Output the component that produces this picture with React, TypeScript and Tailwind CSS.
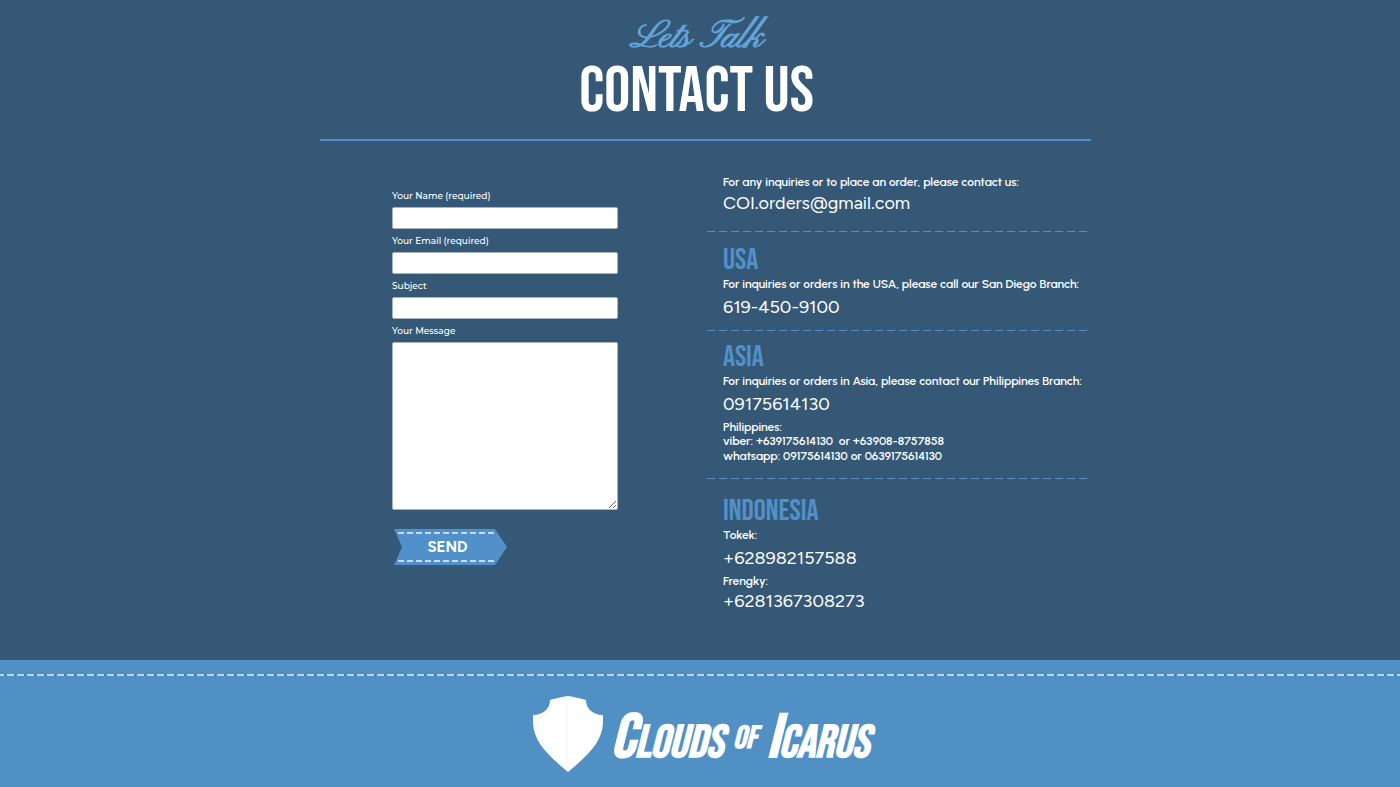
import type { ReactNode } from "react";

const condensed = "font-['Bebas_Neue','Roboto_Condensed','Liberation_Sans_Narrow',sans-serif] uppercase";

const phone = "block text-[18px] leading-6";
const note = "font-['Urbanist','Figtree','Lato',sans-serif] text-[12px] leading-[14px] font-semibold";

function StitchLine() {
  return (
    <div
      aria-hidden="true"
      className="h-px bg-[repeating-linear-gradient(90deg,#5190c8_0_8px,transparent_8px_12px)]"
    />
  );
}

function Region({ title, children }: { title: string; children: ReactNode }) {
  return (
    <section className="pl-4">
      <h2 className={`${condensed} text-[30px] leading-7 text-[#5190c8]`}>{title}</h2>
      {children}
    </section>
  );
}

function Field({ id, label, type = "text" }: { id: string; label: string; type?: string }) {
  return (
    <div className="mb-[3px]">
      <label htmlFor={id} className="block text-[9px] leading-4 font-medium">
        {label}
      </label>
      <input
        id={id}
        name={id}
        type={type}
        className="mt-[3px] mb-1 block h-[22px] w-full rounded-[2px] border border-[#a9b4be] bg-white px-2 text-xs text-gray-800"
      />
    </div>
  );
}

function ContactForm() {
  return (
    <form className="w-[226px] shrink-0 pt-[47px] font-['Montserrat','Open_Sans',sans-serif]" onSubmit={(e) => e.preventDefault()}>
      <Field id="name" label="Your Name (required)" />
      <Field id="email" label="Your Email (required)" type="email" />
      <Field id="subject" label="Subject" />
      <label htmlFor="message" className="block text-[9px] leading-4 font-medium">
        Your Message
      </label>
      <textarea
        id="message"
        name="message"
        className="mt-[3px] block h-[168px] w-full rounded-[2px] border border-[#a9b4be] bg-white px-2 py-1 text-xs text-gray-800"
      />
      <button
        type="submit"
        className="mt-[19px] ml-[2px] flex h-9 w-[113px] flex-col justify-between bg-[#5190c8] py-[3px] pr-3 pl-1 font-['Figtree','Lato',sans-serif] text-[15px] font-bold [clip-path:polygon(0_0,101px_0,100%_50%,101px_100%,0_100%,8px_50%)]"
      >
        <span className="h-[2px] w-full bg-[repeating-linear-gradient(90deg,#c5dbee_0_6px,transparent_6px_9px)]" />
        <span className="w-full pl-[2px] text-center leading-5">SEND</span>
        <span className="h-[2px] w-full bg-[repeating-linear-gradient(90deg,#c5dbee_0_6px,transparent_6px_9px)]" />
      </button>
    </form>
  );
}

function ContactDetails() {
  return (
    <div className="mr-[2px] ml-[89px] min-w-0 flex-1 pt-[34px] whitespace-nowrap">
      <section className="mb-4 pl-4">
        <p className={note}>For any inquiries or to place an order, please contact us:</p>
        <a href="mailto:COI.orders@gmail.com" className={`${phone} mt-[2px]`}>
          COI.orders@gmail.com
        </a>
      </section>
      <StitchLine />
      <div className="pt-[14px] pb-[11px]">
        <Region title="USA">
          <p className={`${note} mt-[3px]`}>For inquiries or orders in the USA, please call our San Diego Branch:</p>
          <a href="tel:6194509100" className={`${phone} mt-1`}>619-450-9100</a>
        </Region>
      </div>
      <StitchLine />
      <div className="pt-3 pb-[15px]">
        <Region title="Asia">
          <p className={`${note} mt-[3px]`}>For inquiries or orders in Asia, please contact our Philippines Branch:</p>
          <a href="tel:09175614130" className={`${phone} mt-1`}>09175614130</a>
          <p className={`${note} mt-1`}>Philippines:</p>
          <p className={`${note} whitespace-pre`}>{"viber: +639175614130  or +63908-8757858"}</p>
          <p className={`${note} mt-px`}>whatsapp: 09175614130 or 0639175614130</p>
        </Region>
      </div>
      <StitchLine />
      <div className="pt-[18px]">
        <Region title="Indonesia">
          <p className={`${note} mt-[3px]`}>Tokek:</p>
          <a href="tel:+628982157588" className={`${phone} mt-1`}>+628982157588</a>
          <p className={`${note} mt-1`}>Frengky:</p>
          <a href="tel:+6281367308273" className={`${phone} mt-px`}>+6281367308273</a>
        </Region>
      </div>
    </div>
  );
}

function Shield() {
  return (
    <svg viewBox="0 0 70 76" className="h-[76px] w-[70px] shrink-0" aria-hidden="true">
      <path
        fill="#fff"
        d="M35 0C41 1 47 2 53 4C53 12 59 19 70 19V27C69 47 54 60 35 76C16 60 1 47 0 27V19C11 19 17 12 17 4C23 2 29 1 35 0Z"
      />
      <path
        fill="none"
        stroke="#e9eff4"
        strokeWidth="0.7"
        d="M34 5V72M34 4L19 7C18 16 12 21 4 23V29C6 46 17 56 34 72"
      />
    </svg>
  );
}

export default function App() {
  return (
    <div className="flex min-h-screen flex-col bg-[#355876] font-['Figtree','Lato',sans-serif] text-white">
      <main className="flex-1 pb-10 pl-[11px]">
        <div className="mx-auto max-w-[771px]">
          <header className="border-b-2 border-[#5190c8] pt-[14px] pr-[18px] pb-4 text-center">
            <p className="font-['Pinyon_Script','Great_Vibes','Liberation_Serif',serif] text-[39px] leading-[48px] font-bold text-[#62a4d9]">Lets Talk</p>
            <h1 className={`${condensed} text-[65px] leading-[61px]`}>Contact Us</h1>
          </header>
          <div className="flex pl-[72px]">
            <ContactForm />
            <ContactDetails />
          </div>
        </div>
      </main>
      <footer className="h-[127px] bg-[#5190c4] pt-[14px]">
        <div
          aria-hidden="true"
          className="h-[2px] bg-[repeating-linear-gradient(90deg,#bdd6ec_0_7px,#4682b8_7px_10px)] bg-[position:-3px_0]"
        />
        <div className="mt-5 flex items-center justify-center gap-2 pl-[2px]">
          <Shield />
          <p className={`${condensed} flex items-baseline gap-[10px] pt-[10px] leading-none font-bold italic`}>
            <span className="text-[46px]"><span className="text-[62px]">C</span>louds</span>
            <span className="self-center text-[32px]">of</span>
            <span className="text-[46px]"><span className="text-[62px]">I</span>carus</span>
          </p>
        </div>
      </footer>
    </div>
  );
}
